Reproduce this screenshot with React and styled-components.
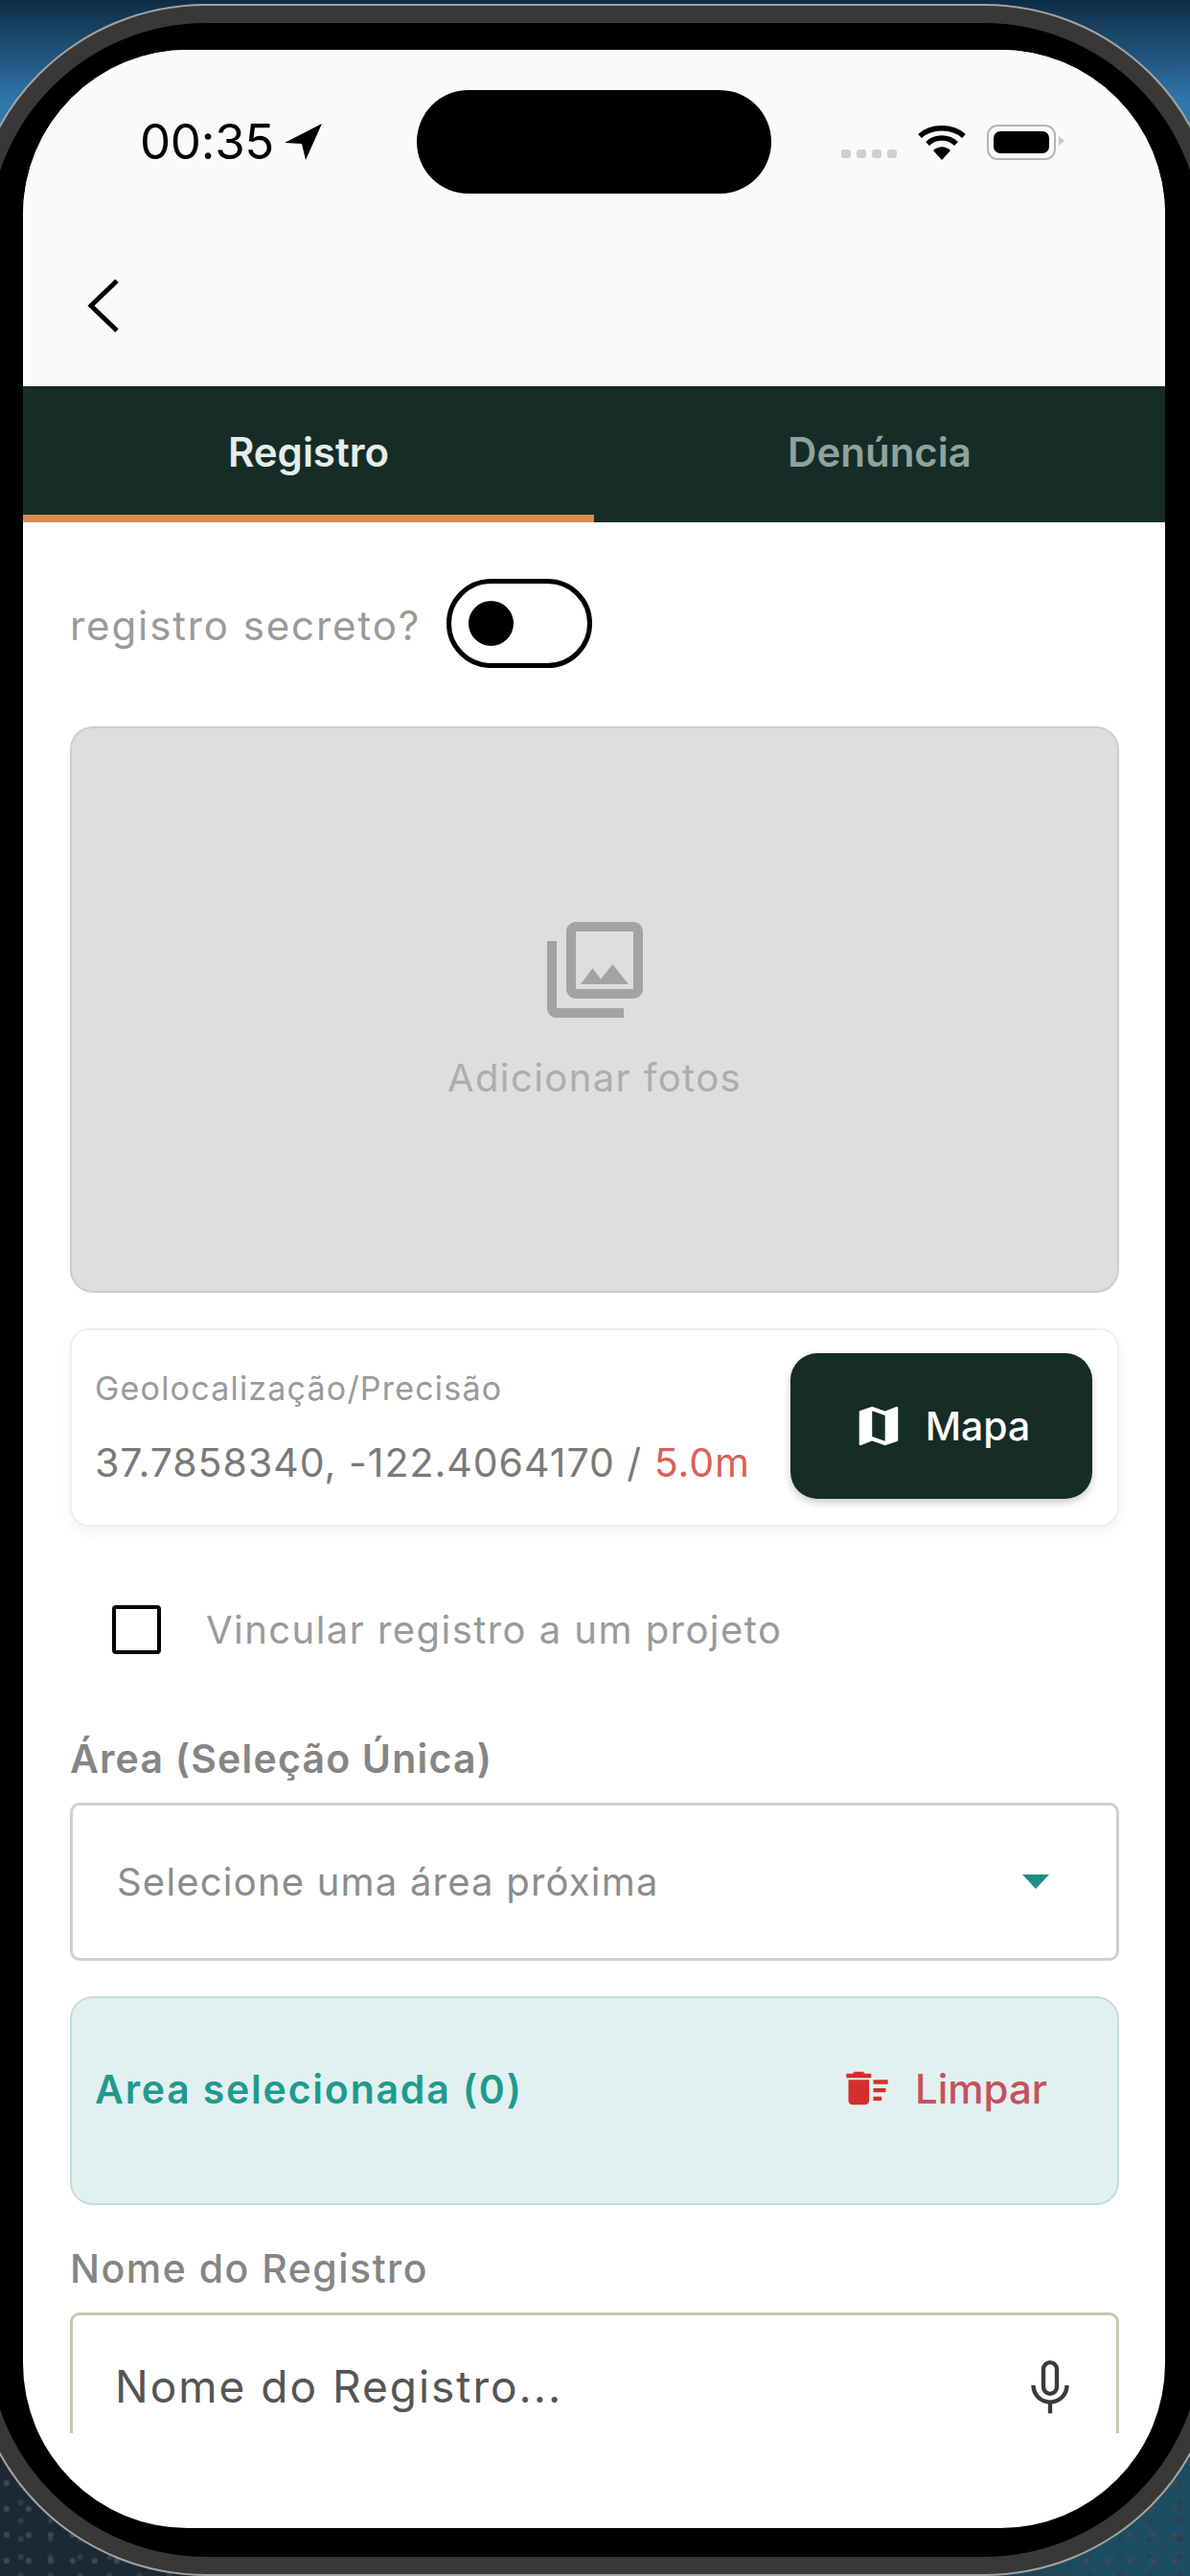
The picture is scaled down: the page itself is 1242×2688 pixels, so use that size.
import React from "react";
import styled, { createGlobalStyle } from "styled-components";

const GlobalStyle = createGlobalStyle`
  * {
    box-sizing: border-box;
  }
  html,
  body {
    margin: 0;
    padding: 0;
    background: #14202c;
    font-family: Inter, "Noto Sans", "Liberation Sans", sans-serif;
  }
`;

const App = () => {
  return (
    <>
      <GlobalStyle />
      <Page>
        <Frame>
          <Screen>
            <Header>
              <StatusBar>
                <StatusLeft>
                  <Time>00:35</Time>
                  <svg width="39" height="38" viewBox="0 0 39 38">
                    <path d="M39 0 L0 20 L18 21 L22 38 Z" fill="#000" />
                  </svg>
                </StatusLeft>
                <Island />
                <StatusRight>
                  <SignalDots>
                    <Dot />
                    <Dot />
                    <Dot />
                    <Dot />
                  </SignalDots>
                  <svg width="50" height="37" viewBox="0 0 50 37">
                    <path d="M2 12 C14 1 36 1 48 12" fill="none" stroke="#000" strokeWidth="5.5" />
                    <path d="M10 20 C18 12 32 12 40 20" fill="none" stroke="#000" strokeWidth="5.5" />
                    <path d="M16 27 L25 37 L34 27 C28 22 22 22 16 27 Z" fill="#000" />
                  </svg>
                  <Battery>
                    <BatteryFill />
                  </Battery>
                </StatusRight>
              </StatusBar>
              <BackRow>
                <svg width="36" height="58" viewBox="0 0 36 58">
                  <path d="M32 3 L5 29 L32 55" fill="none" stroke="#000" strokeWidth="5" />
                </svg>
              </BackRow>
            </Header>

            <Tabs>
              <Tab $active>Registro</Tab>
              <Tab>Denúncia</Tab>
            </Tabs>

            <FormClip>
              <Form>
                <SecretRow>
                  <SecretLabel>registro secreto?</SecretLabel>
                  <Toggle>
                    <Knob />
                  </Toggle>
                </SecretRow>

                <PhotoBox>
                  <svg width="120" height="120" viewBox="0 0 24 24" fill="#a3a3a3">
                    <path d="M20 4v12H8V4h12m0-2H8c-1.1 0-2 .9-2 2v12c0 1.1.9 2 2 2h12c1.1 0 2-.9 2-2V4c0-1.1-.9-2-2-2zm-8.5 9.67 1.69 2.26 2.48-3.1L19 15H9zM2 6v14c0 1.1.9 2 2 2h14v-2H4V6H2z" />
                  </svg>
                  <PhotoText>Adicionar fotos</PhotoText>
                </PhotoBox>

                <GeoCard>
                  <GeoInfo>
                    <GeoLabel>Geolocalização/Precisão</GeoLabel>
                    <GeoValue>
                      37.7858340, -122.4064170 / <GeoAccuracy>5.0m</GeoAccuracy>
                    </GeoValue>
                  </GeoInfo>
                  <MapButton>
                    <svg width="54" height="54" viewBox="0 0 24 24" fill="#fff">
                      <path d="M20.5 3l-.16.03L15 5.1 9 3 3.36 4.9c-.21.07-.36.25-.36.48V20.5c0 .28.22.5.5.5l.16-.03L9 18.9l6 2.1 5.64-1.9c.21-.07.36-.25.36-.48V3.5c0-.28-.22-.5-.5-.5zM15 19l-6-2.11V5l6 2.11V19z" />
                    </svg>
                    Mapa
                  </MapButton>
                </GeoCard>

                <LinkRow>
                  <CheckBox />
                  <LinkText>Vincular registro a um projeto</LinkText>
                </LinkRow>

                <FieldLabel $top={85} $bold>
                  Área (Seleção Única)
                </FieldLabel>
                <SelectBox>
                  <SelectText>Selecione uma área próxima</SelectText>
                  <Caret />
                </SelectBox>

                <SelectedBox>
                  <SelectedText>Area selecionada (0)</SelectedText>
                  <ClearAction>
                    <svg width="52" height="52" viewBox="0 0 24 24" fill="#d32f2f">
                      <path d="M15 16h4v2h-4zm0-8h7v2h-7zm0 4h6v2h-6zM3 18c0 1.1.9 2 2 2h6c1.1 0 2-.9 2-2V8H3v10zM14 5h-3l-1-1H6L5 5H2v2h12z" />
                    </svg>
                    Limpar
                  </ClearAction>
                </SelectedBox>

                <FieldLabel $top={42}>Nome do Registro</FieldLabel>
                <NameInput>
                  <NamePlaceholder>Nome do Registro...</NamePlaceholder>
                  <svg width="70" height="70" viewBox="0 0 24 24" fill="none" stroke="#3a3a3a" strokeWidth="1.5">
                    <rect x="9.6" y="2.8" width="4.8" height="11.2" rx="2.4" />
                    <path d="M6 11c0 3.4 2.7 6 6 6s6-2.6 6-6" />
                    <path d="M12 17v4" />
                  </svg>
                </NameInput>
              </Form>
            </FormClip>
          </Screen>
        </Frame>
      </Page>
    </>
  );
};

const Page = styled.div`
  position: relative;
  width: 1242px;
  height: 2688px;
  overflow: hidden;
  padding-top: 6px;
  background: linear-gradient(180deg, #0f2c44 0, #2f78ad 4%, #2f78ad 8%, #1c4a63 60%, #1b3d52 100%);

  &::before {
    content: "";
    position: absolute;
    left: 0;
    right: 0;
    bottom: 0;
    height: 240px;
    background:
      radial-gradient(circle at 30% 30%, #3a4a58 0 2px, transparent 4px) 0 0 / 23px 27px,
      radial-gradient(circle at 70% 60%, #2f3e4c 0 2px, transparent 4px) 0 0 / 31px 19px,
      linear-gradient(90deg, #1c2935 0, #1c2935 70%, #1d4d63 92%);
  }
`;

const Frame = styled.div`
  position: relative;
  margin: 0 -30px;
  height: 2680px;
  padding: 28px 38px 30px 36px;
  background: #000;
  border: 18px solid #3a3837;
  border-radius: 245px;
  box-shadow: 0 0 0 2px #a4a4a4;
`;

const Screen = styled.div`
  display: flex;
  flex-direction: column;
  height: 100%;
  overflow: hidden;
  background: #fff;
  border-radius: 172px;
`;

const Header = styled.div`
  height: 351px;
  background: #fafafa;
`;

const StatusBar = styled.div`
  display: grid;
  grid-template-columns: 1fr 370px 1fr;
  align-items: center;
  padding-top: 42px;
`;

const StatusLeft = styled.div`
  display: flex;
  align-items: center;
  gap: 11px;
  padding-left: 122px;
`;

const Time = styled.span`
  font-size: 51px;
  font-weight: 400;
  line-height: 108px;
  color: #000;
  letter-spacing: -0.3px;
`;

const Island = styled.div`
  height: 108px;
  background: #000;
  border-radius: 54px;
`;

const StatusRight = styled.div`
  display: flex;
  align-items: center;
  padding-left: 73px;
  gap: 22px;
`;

const SignalDots = styled.div`
  display: flex;
  gap: 6px;
  margin-top: 24px;
`;

const Dot = styled.div`
  width: 10px;
  height: 9px;
  background: #cfcfcf;
  border-radius: 3px;
`;

const Battery = styled.div`
  position: relative;
  width: 72px;
  height: 37px;
  padding: 5px;
  border: 2px solid #b5b5b5;
  border-radius: 11px;

  &::after {
    content: "";
    position: absolute;
    right: -11px;
    top: 10px;
    border-left: 6px solid #c4c4c4;
    border-top: 5px solid transparent;
    border-bottom: 5px solid transparent;
  }
`;

const BatteryFill = styled.div`
  height: 100%;
  background: #000;
  border-radius: 7px;
`;

const BackRow = styled.div`
  display: flex;
  padding: 88px 0 0 66px;
`;

const Tabs = styled.div`
  display: flex;
  height: 142px;
  background: #152c27;
`;

const Tab = styled.div`
  flex: 1;
  display: flex;
  align-items: center;
  justify-content: center;
  padding-top: 3px;
  font-size: 42px;
  font-weight: 600;
  color: ${({ $active }) => ($active ? "#e6ece9" : "#8fa39c")};
  border-bottom: 8px solid ${({ $active }) => ($active ? "#d98a4e" : "transparent")};
`;

const FormClip = styled.div`
  height: 1994px;
  overflow: hidden;
`;

const Form = styled.div`
  padding: 59px 48px 0 49px;
`;

const SecretRow = styled.div`
  display: flex;
  align-items: center;
  gap: 27px;
  height: 93px;
`;

const SecretLabel = styled.span`
  padding-top: 4px;
  font-size: 42px;
  letter-spacing: 1.9px;
  color: #9a9a9a;
`;

const Toggle = styled.div`
  display: flex;
  align-items: center;
  width: 152px;
  height: 93px;
  padding-left: 18px;
  border: 5px solid #000;
  border-radius: 47px;
`;

const Knob = styled.div`
  width: 47px;
  height: 47px;
  background: #000;
  border-radius: 50%;
`;

const PhotoBox = styled.div`
  display: flex;
  flex-direction: column;
  align-items: center;
  height: 591px;
  margin-top: 61px;
  padding-top: 192px;
  background: #dedede;
  border: 2px solid #cdcdcd;
  border-radius: 24px;
`;

const PhotoText = styled.div`
  margin-top: 28px;
  font-size: 40px;
  letter-spacing: 1.4px;
  color: #adadad;
`;

const GeoCard = styled.div`
  display: flex;
  align-items: center;
  justify-content: space-between;
  height: 207px;
  margin-top: 37px;
  padding: 0 26px 0 24px;
  background: #fff;
  border: 2px solid #eeeeee;
  border-radius: 20px;
  box-shadow: 0 6px 14px rgba(0, 0, 0, 0.05);
`;

const GeoInfo = styled.div`
  display: flex;
  flex-direction: column;
  gap: 32px;
`;

const GeoLabel = styled.div`
  font-size: 34px;
  letter-spacing: 1.2px;
  color: #9a9a9a;
`;

const GeoValue = styled.div`
  font-size: 41px;
  letter-spacing: 1px;
  color: #7a7a7a;
`;

const GeoAccuracy = styled.span`
  color: #d9605a;
`;

const MapButton = styled.div`
  display: flex;
  align-items: center;
  justify-content: center;
  gap: 22px;
  width: 315px;
  height: 152px;
  margin-bottom: 4px;
  font-size: 41px;
  font-weight: 500;
  color: #fff;
  background: #152c27;
  border-radius: 28px;
  box-shadow: 0 4px 8px rgba(0, 0, 0, 0.2);
`;

const LinkRow = styled.div`
  display: flex;
  align-items: center;
  gap: 47px;
  height: 51px;
  margin-top: 82px;
  padding-left: 44px;
`;

const CheckBox = styled.div`
  width: 51px;
  height: 51px;
  border: 4px solid #000;
  border-radius: 4px;
`;

const LinkText = styled.span`
  font-size: 40px;
  letter-spacing: 1.45px;
  color: #9a9a9a;
`;

const FieldLabel = styled.div`
  margin-top: ${({ $top }) => $top}px;
  font-size: 41px;
  line-height: 48px;
  font-weight: ${({ $bold }) => ($bold ? 600 : 500)};
  letter-spacing: ${({ $bold }) => ($bold ? 1.2 : 1.5)}px;
  color: #858585;
`;

const SelectBox = styled.div`
  display: flex;
  align-items: center;
  justify-content: space-between;
  height: 165px;
  margin-top: 22px;
  padding: 0 70px 0 46px;
  border: 3px solid #cfcfcf;
  border-radius: 10px;
`;

const SelectText = styled.span`
  font-size: 40px;
  letter-spacing: 1.2px;
  color: #8c8c8c;
`;

const Caret = styled.div`
  border-top: 15px solid #1f8f85;
  border-left: 14px solid transparent;
  border-right: 14px solid transparent;
`;

const SelectedBox = styled.div`
  display: flex;
  align-items: flex-start;
  justify-content: space-between;
  height: 218px;
  margin-top: 37px;
  padding: 70px 73px 0 24px;
  background: #e2f1f0;
  border: 2px solid #c2dedb;
  border-radius: 24px;
`;

const SelectedText = styled.span`
  font-size: 41px;
  font-weight: 600;
  letter-spacing: 1.8px;
  color: #1f9a8e;
`;

const ClearAction = styled.div`
  display: flex;
  align-items: center;
  gap: 24px;
  margin-top: -2px;
  font-size: 42px;
  font-weight: 500;
  color: #c5525c;
`;

const NameInput = styled.div`
  display: flex;
  align-items: flex-start;
  justify-content: space-between;
  height: 200px;
  margin-top: 22px;
  padding: 41px 34px 0 44px;
  border: 3px solid #c9c9ab;
  border-radius: 10px;
`;

const NamePlaceholder = styled.span`
  margin-top: 5px;
  font-size: 46px;
  letter-spacing: 2px;
  color: #555;
`;

export default App;
